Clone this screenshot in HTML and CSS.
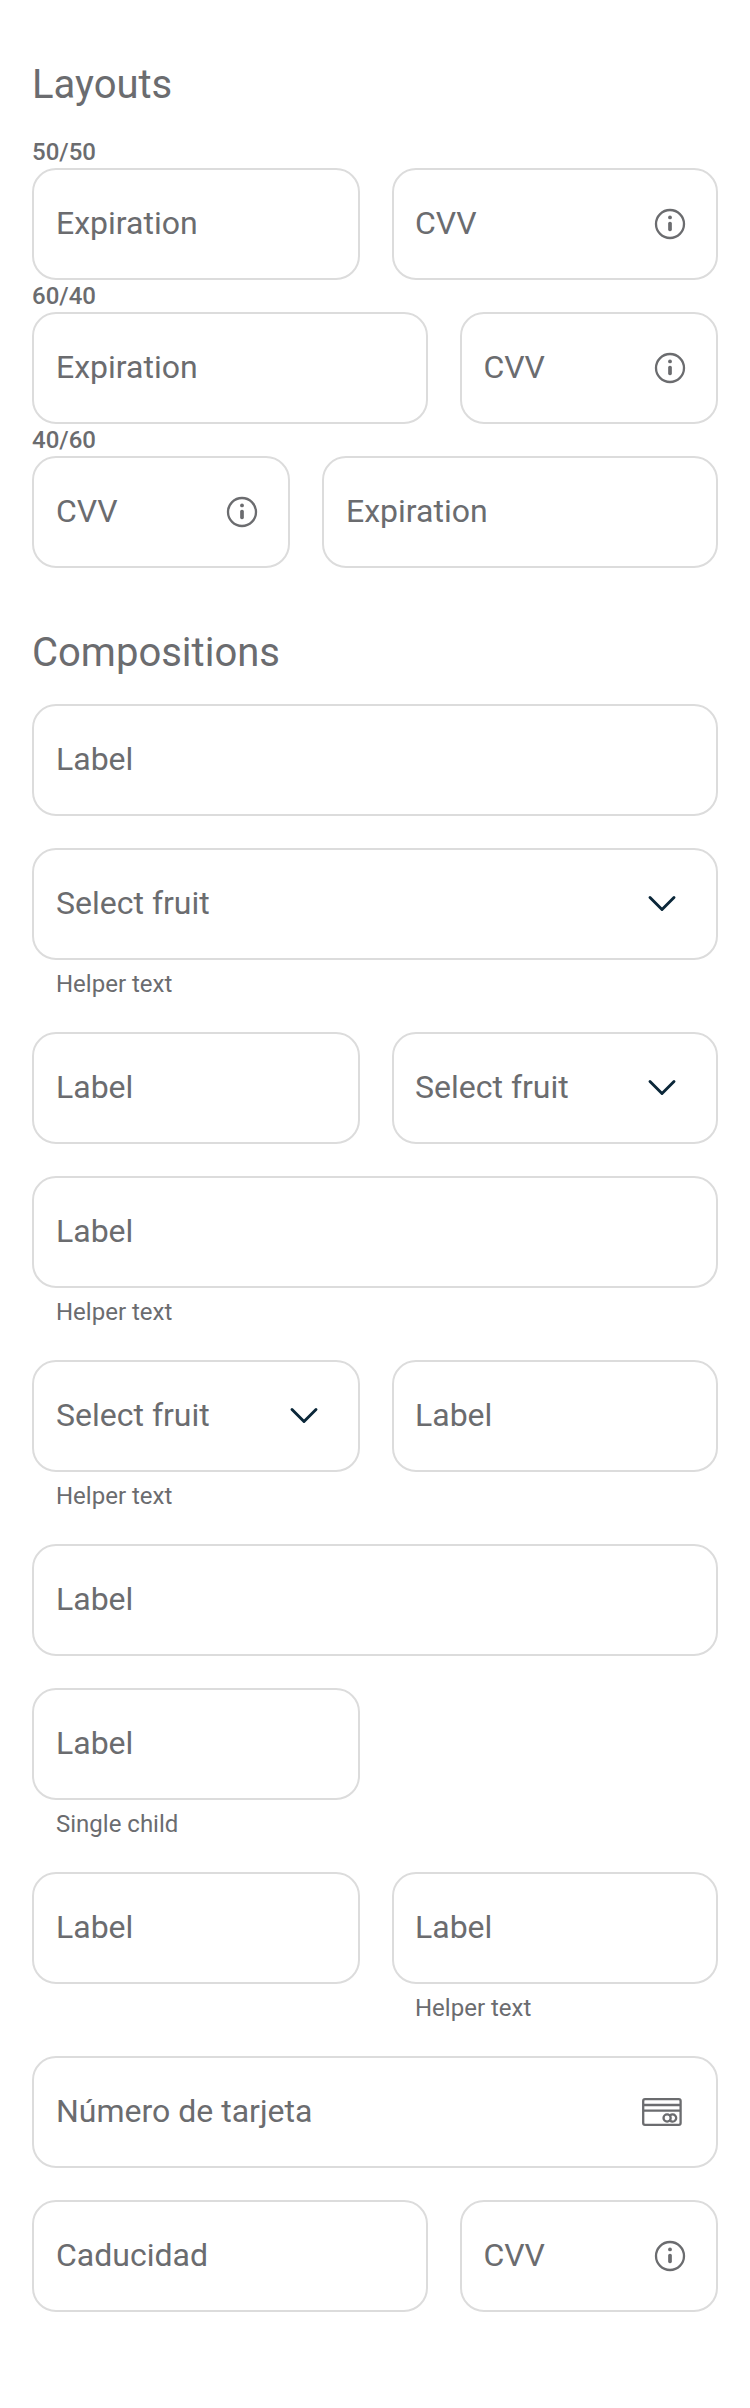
FILE: index.html
```
<!DOCTYPE html>
<html lang="es">
<head>
<meta charset="utf-8">
<title>Form layouts</title>
<link rel="stylesheet" href="styles.css">
</head>
<body>
<svg class="symbols" aria-hidden="true">
  <symbol id="info" viewBox="0 0 32 32">
    <circle cx="16" cy="16" r="14" fill="none" stroke="currentColor" stroke-width="2.3"/>
    <circle cx="16" cy="9.4" r="1.9" fill="currentColor"/>
    <rect x="14.15" y="13.8" width="3.7" height="9.4" rx="1.7" fill="currentColor"/>
  </symbol>
  <symbol id="chevron" viewBox="0 0 40 40">
    <path d="M8 14.5 20 26.5 32 14.5" fill="none" stroke="currentColor" stroke-width="2.9" stroke-linecap="round" stroke-linejoin="round"/>
  </symbol>
  <symbol id="card" viewBox="0 0 40 28">
    <g fill="none" stroke="currentColor" stroke-width="2.3">
      <rect x="1.2" y="1.2" width="37.4" height="25.6" rx="1.8"/>
      <path d="M1 7H39M1 12.7H39"/>
      <circle cx="25.1" cy="20" r="3.6"/>
      <path d="M28.1 17.4A3.6 3.6 0 1 1 28.1 22.6"/>
    </g>
  </symbol>
</svg>
<main class="page">
  <h1 class="heading">Layouts</h1>
  <p class="ratio">50/50</p>
  <div class="row half">
    <div class="field">Expiration</div>
    <div class="field">CVV<svg class="info"><use href="#info"/></svg></div>
  </div>
  <p class="ratio">60/40</p>
  <div class="row wide-narrow">
    <div class="field">Expiration</div>
    <div class="field">CVV<svg class="info"><use href="#info"/></svg></div>
  </div>
  <p class="ratio">40/60</p>
  <div class="row narrow-wide">
    <div class="field">CVV<svg class="info"><use href="#info"/></svg></div>
    <div class="field">Expiration</div>
  </div>

  <h1 class="heading second">Compositions</h1>
  <div class="stack">
    <div class="field">Label</div>
    <div>
      <div class="field">Select fruit<svg class="chevron"><use href="#chevron"/></svg></div>
      <p class="helper">Helper text</p>
    </div>
    <div class="row half">
      <div class="field">Label</div>
      <div class="field">Select fruit<svg class="chevron"><use href="#chevron"/></svg></div>
    </div>
    <div>
      <div class="field">Label</div>
      <p class="helper">Helper text</p>
    </div>
    <div class="row half">
      <div>
        <div class="field">Select fruit<svg class="chevron"><use href="#chevron"/></svg></div>
        <p class="helper">Helper text</p>
      </div>
      <div class="field">Label</div>
    </div>
    <div class="field">Label</div>
    <div class="row half">
      <div>
        <div class="field">Label</div>
        <p class="helper">Single child</p>
      </div>
    </div>
    <div class="row half">
      <div class="field">Label</div>
      <div class="column">
        <div class="field">Label</div>
        <p class="helper">Helper text</p>
      </div>
    </div>
    <div class="field">Número de tarjeta<svg class="card"><use href="#card"/></svg></div>
    <div class="row wide-narrow">
      <div class="field">Caducidad</div>
      <div class="field">CVV<svg class="info"><use href="#info"/></svg></div>
    </div>
  </div>
</main>
</body>
</html>
```
FILE: styles.css
```
* {
  box-sizing: border-box;
}

body {
  margin: 0;
  background: #fff;
  color: #6b6c6f;
  font-family: Roboto, sans-serif;
}

.symbols {
  display: none;
}

.page {
  height: 2408px;
  padding: 56px 32px 0;
}

.heading {
  height: 80px;
  margin: 0;
  font-size: 40px;
  font-weight: 400;
  line-height: 58px;
}

.heading.second {
  margin-top: 56px;
}

.ratio {
  height: 32px;
  margin: 0;
  font-size: 24px;
  font-weight: 500;
  line-height: 32px;
}

.row {
  display: grid;
  align-items: start;
  column-gap: 32px;
}

.half {
  grid-template-columns: 328px 326px;
}

.wide-narrow {
  grid-template-columns: 396px 258px;
}

.narrow-wide {
  grid-template-columns: 258px 396px;
}

.stack {
  display: flex;
  flex-direction: column;
  gap: 32px;
}

.field {
  display: flex;
  align-items: center;
  justify-content: space-between;
  height: 112px;
  padding: 0 30px 2px 22px;
  border: 2px solid #dcdcdc;
  border-radius: 24px;
  font-size: 32px;
  line-height: 48px;
}

.half > * + .field,
.column > .field {
  padding-left: 21px;
}

.wide-narrow > .field + .field {
  padding-left: 21.4px;
}

.helper {
  height: 40px;
  margin: 0;
  padding: 8px 24px 0;
  font-size: 24px;
  line-height: 32px;
}

.column > .helper {
  padding-left: 23px;
}

.info {
  width: 32px;
  height: 32px;
  position: relative;
  top: 1px;
}

.chevron {
  width: 40px;
  height: 40px;
  margin-right: 4px;
  color: #0b2739;
}

.card {
  width: 40px;
  height: 28px;
  margin-right: 4px;
  position: relative;
  top: 1px;
}
```
